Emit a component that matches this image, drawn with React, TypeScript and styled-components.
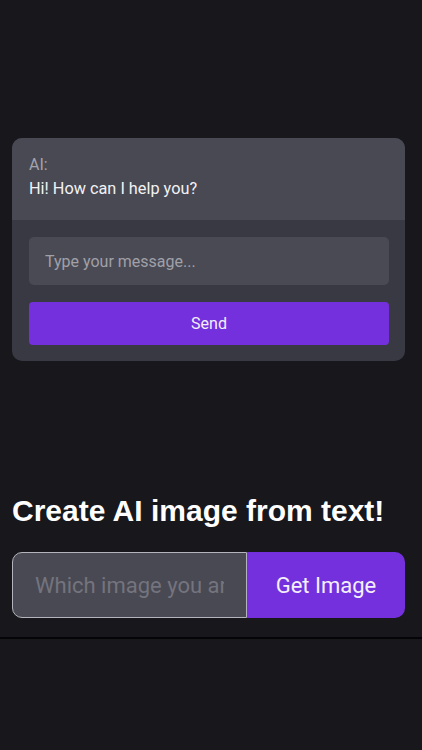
import React from 'react'
import styled, {createGlobalStyle} from 'styled-components'

const GlobalStyle = createGlobalStyle`
  html, body {
    margin: 0;
    padding: 0;
    background: #17171c;
  }
  body {
    font-family: Roboto, 'Liberation Sans', sans-serif;
    color: #f4f4f6;
  }
  * {
    box-sizing: border-box;
  }
`

const Page = styled.main`
  min-height: 750px;
  display: flex;
  flex-direction: column;
`

const Content = styled.div`
  padding: 138px 17px 0 12px;
  display: flex;
  flex-direction: column;
`

const ChatCard = styled.section`
  background: #393943;
  border-radius: 10px;
  overflow: hidden;
`

const MessageArea = styled.div`
  background: #494953;
  padding: 15px 17px 0 17px;
  height: 82px;
`

const Sender = styled.div`
  font-size: 16px;
  line-height: 24px;
  color: #a3a3ab;
`

const MessageText = styled.div`
  font-size: 16.3px;
  line-height: 24px;
  color: #f2f2f4;
`

const ChatForm = styled.form`
  padding: 17px 16px 16px 17px;
  display: flex;
  flex-direction: column;
  gap: 17px;
`

const ChatInput = styled.input`
  height: 48px;
  width: 100%;
  border: none;
  border-radius: 5px;
  background: #4a4a54;
  padding: 0 16px;
  font-family: Roboto, sans-serif;
  font-size: 16px;
  color: #f2f2f4;
  outline: none;

  &::placeholder {
    color: #a0a0a8;
  }
`

const SendButton = styled.button`
  height: 43px;
  width: 100%;
  border: none;
  border-radius: 4px;
  background: #7530de;
  color: #f3effc;
  font-family: Roboto, sans-serif;
  font-size: 16px;
  cursor: pointer;
`

const Heading = styled.h1`
  margin: 133px 0 0 0;
  font-family: 'Liberation Sans', Arial, sans-serif;
  font-weight: 700;
  font-size: 30px;
  line-height: 34px;
  color: #ffffff;
`

const ImageForm = styled.form`
  margin-top: 24px;
  display: flex;
  height: 66px;
`

const PromptInput = styled.input`
  flex: 0 0 235px;
  min-width: 0;
  height: 100%;
  border: 1px solid #b4b4bc;
  border-radius: 10px 0 0 10px;
  background: #494953;
  padding: 0 22px;
  font-family: Roboto, sans-serif;
  font-size: 22px;
  color: #f2f2f4;
  outline: none;

  &::placeholder {
    color: #74747e;
  }
`

const ImageButton = styled.button`
  flex: 1;
  height: 100%;
  border: none;
  border-radius: 0 10px 10px 0;
  background: #7530de;
  color: #f3effc;
  font-family: Roboto, sans-serif;
  font-size: 22px;
  cursor: pointer;
`

const Divider = styled.hr`
  margin: 19px 0 0 0;
  border: none;
  border-top: 2px solid #050507;
`

const App = () => (
  <Page>
    <GlobalStyle />
    <Content>
      <ChatCard>
        <MessageArea>
          <Sender>AI:</Sender>
          <MessageText>Hi! How can I help you?</MessageText>
        </MessageArea>
        <ChatForm onSubmit={e => e.preventDefault()}>
          <ChatInput placeholder="Type your message..." />
          <SendButton type="submit">Send</SendButton>
        </ChatForm>
      </ChatCard>
      <Heading>Create AI image from text!</Heading>
      <ImageForm onSubmit={e => e.preventDefault()}>
        <PromptInput placeholder="Which image you are looking for?" />
        <ImageButton type="submit">Get Image</ImageButton>
      </ImageForm>
    </Content>
    <Divider />
  </Page>
)

export default App
